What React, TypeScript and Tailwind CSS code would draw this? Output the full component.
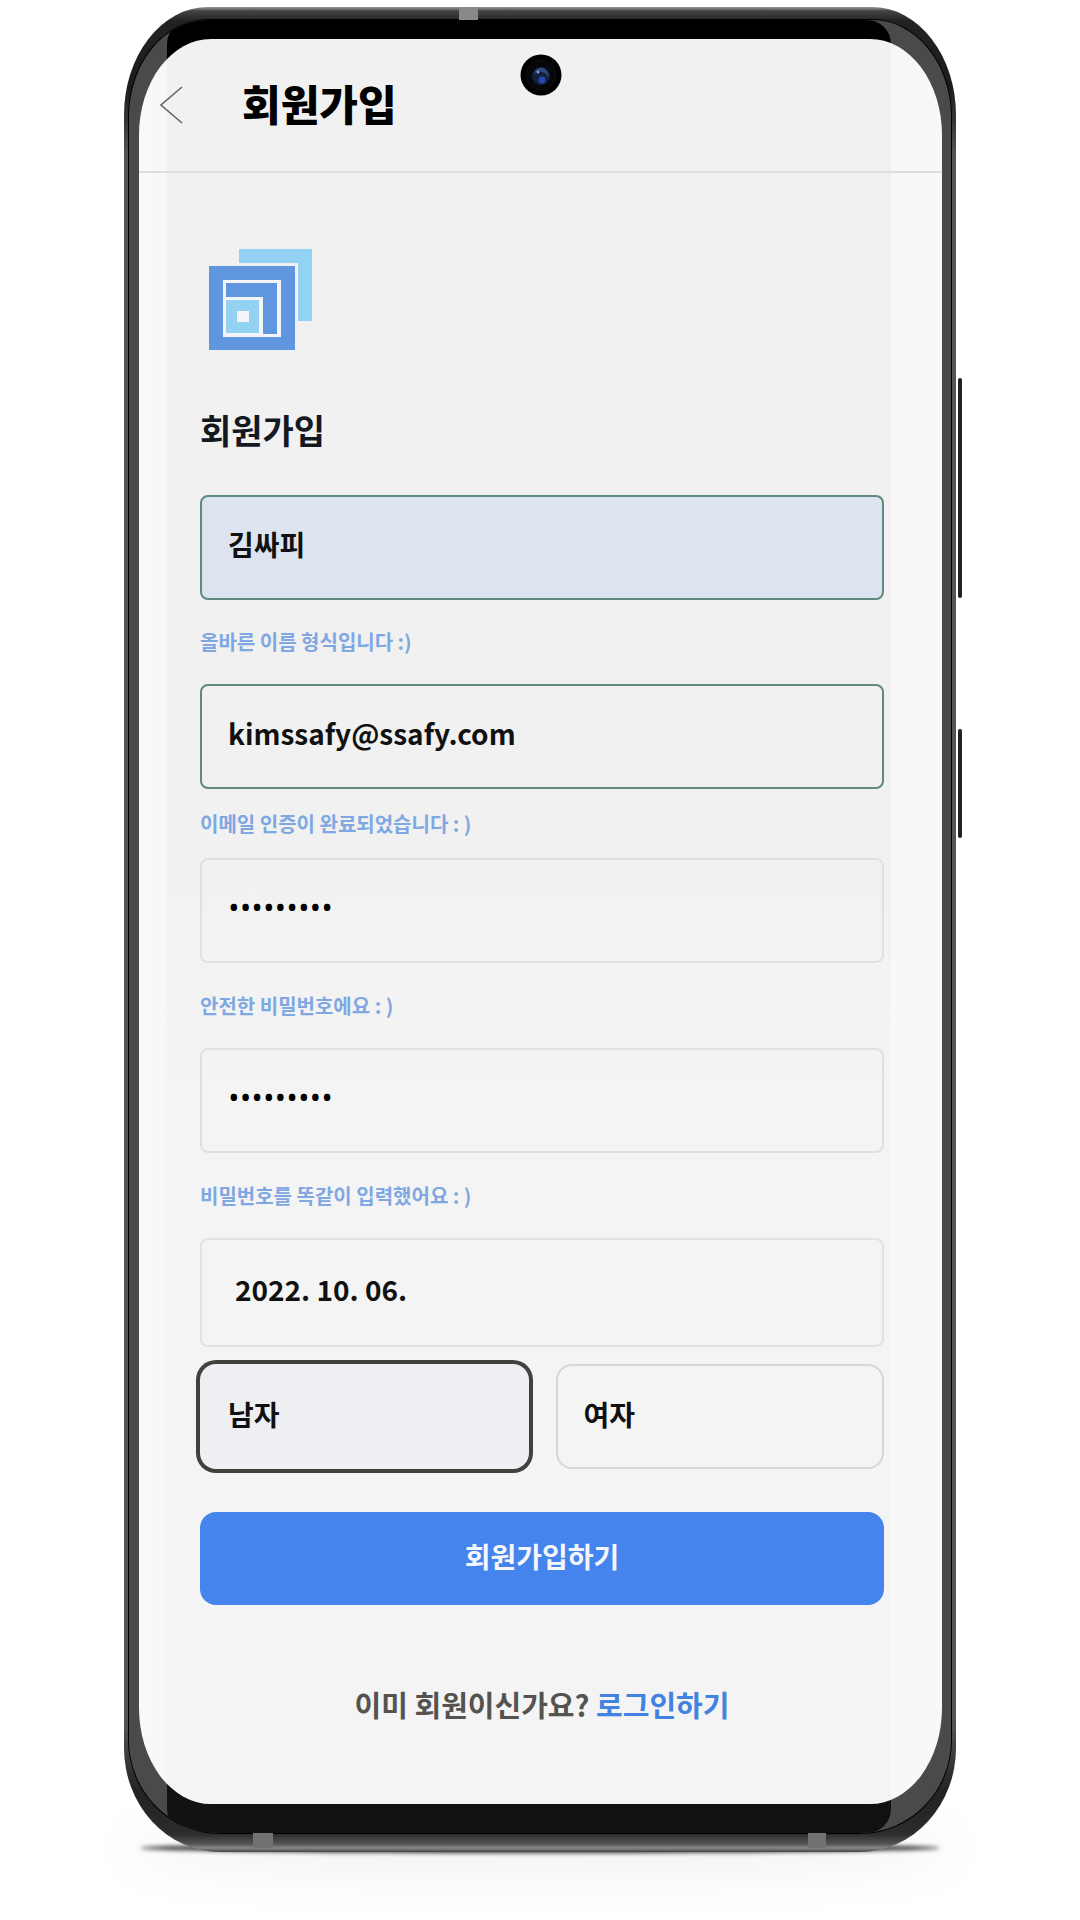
import { useState } from "react";

const FONT = "font-['Noto_Sans_CJK_KR','Noto_Sans',sans-serif]";

function Logo() {
  return (
    <svg viewBox="0 0 103 102" className="h-[102px] w-[103px]" role="img" aria-label="로고">
      <path d="M30 0H103V72H89V14H30Z" fill="#93d2f3" />
      <path d="M0 17H86V101H0Z" fill="#6096e0" />
      <path d="M14 31H72V88H14Z" fill="#f3f5f8" />
      <path d="M17 34H68V85H54V48H17Z" fill="#6096e0" />
      <path d="M17 51H50V84H17Z" fill="#93d2f3" />
      <path d="M28 62H40V73H28Z" fill="#f3f5f8" />
    </svg>
  );
}

type FieldProps = {
  label: string;
  type?: string;
  value: string;
  className: string;
};

function Field({ label, type = "text", value, className }: FieldProps) {
  const [text, setText] = useState(value);
  return (
    <input
      aria-label={label}
      type={type}
      value={text}
      onChange={(e) => setText(e.target.value)}
      className={`w-full rounded-lg border-2 pr-7 pb-2 outline-none ${className}`}
    />
  );
}

function Hint({ children, className }: { children: string; className: string }) {
  return <p className={`flex items-center text-[20px] leading-6 font-bold text-[#7fa8e2] ${className}`}>{children}</p>;
}

function Camera() {
  return (
    <svg viewBox="0 0 42 42" className="absolute top-[15px] left-1/2 h-[42px] w-[42px] -translate-x-1/2" aria-hidden="true">
      <circle cx="21" cy="21" r="20.500" fill="#000" />
      <circle cx="21" cy="21" r="15" fill="#05070a" stroke="#0c0e12" strokeWidth="1" />
      <circle cx="21" cy="22" r="9" fill="#14203c" />
      <path d="M14 20a7 7 0 0 1 12-4 8 8 0 0 1 2 8 7 7 0 0 0-6-6 6 6 0 0 0-8 2Z" fill="#304b80" />
      <circle cx="22" cy="26" r="3.500" fill="#2447b5" />
      <circle cx="18" cy="18" r="1.500" fill="#7ba3e0" />
    </svg>
  );
}

function Header() {
  return (
    <header className="flex h-[134px] items-center border-b-2 border-[#dedede] pl-[21px]">
      <button type="button" aria-label="뒤로" className="cursor-pointer">
        <svg viewBox="0 0 24 40" className="h-10 w-6" fill="none" stroke="#666" strokeWidth="1.600">
          <path d="M22 2L1 20L22 38" />
        </svg>
      </button>
      <h1 className="ml-[58px] pb-1 text-[42px] leading-[60px] font-black text-black">회원가입</h1>
    </header>
  );
}

function Gender() {
  const [gender, setGender] = useState("남자");
  return (
    <div role="radiogroup" aria-label="성별" className="grid grid-cols-2 gap-[27px]">
      {["남자", "여자"].map((name) => (
        <label
          key={name}
          className="flex h-[105px] cursor-pointer items-center rounded-2xl border-2 border-[#d3d5d9] pb-1.5 pl-[26px] text-[28px] font-bold text-[#111] has-checked:border-transparent has-checked:bg-[#eeeff2] has-checked:ring-4 has-checked:ring-[#43413e]"
        >
          <input
            type="radio"
            name="gender"
            className="w-0 appearance-none"
            checked={gender === name}
            onChange={() => setGender(name)}
          />
          {name}
        </label>
      ))}
    </div>
  );
}

function SignUpForm() {
  return (
    <form onSubmit={(e) => e.preventDefault()} className="flex flex-col pt-[76px] pr-[58px] pb-[80px] pl-[61px]">
      <div className="pl-[9px]">
        <Logo />
      </div>
      <h2 className="pt-[49px] pb-[35px] text-[34px] leading-[60px] font-bold text-[#14181f]">회원가입</h2>
      <Field label="이름" value="김싸피" className="h-[105px] border-[#5f8a80] bg-[#dde4f0] pl-[26px] text-[28px] font-bold text-[#111]" />
      <Hint className="h-[84px]">올바른 이름 형식입니다 :)</Hint>
      <Field label="이메일" type="email" value="kimssafy@ssafy.com" className="h-[105px] border-[#5f8a80] pl-[26px] text-[28px] font-bold text-[#111]" />
      <Hint className="h-[69px]">{"이메일 인증이 완료되었습니다 : )"}</Hint>
      <Field label="비밀번호" type="password" value="ssafy1234" className="h-[105px] border-[#e0e0e0] pl-[26px] font-['Open_Sans',sans-serif] text-[31px] text-black" />
      <Hint className="h-[85px]">{"안전한 비밀번호에요 : )"}</Hint>
      <Field label="비밀번호 확인" type="password" value="ssafy1234" className="h-[105px] border-[#e0e0e0] pl-[26px] font-['Open_Sans',sans-serif] text-[31px] text-black" />
      <Hint className="h-[85px]">{"비밀번호를 똑같이 입력했어요 : )"}</Hint>
      <div className="flex flex-col gap-[17px]">
        <Field label="생년월일" value="2022. 10. 06." className="h-[109px] border-[#e2e2e2] pl-[33px] text-[28px] font-bold text-[#111]" />
        <Gender />
      </div>
      <div className="pt-[43px] pb-[79px]">
        <button
          type="submit"
          className="h-[93px] w-full cursor-pointer rounded-2xl bg-[#4584ec] pb-1.5 text-[28px] font-bold text-[#f4f6fb]"
        >
          회원가입하기
        </button>
      </div>
      <p className="text-center text-[29px] leading-[40px] font-bold text-[#555350]">
        이미 회원이신가요?{" "}
        <a href="#login" className="text-[#4282e0]">
          로그인하기
        </a>
      </p>
    </form>
  );
}

export default function App() {
  return (
    <div className={`flex min-h-screen items-start bg-white pt-[7px] pr-[118px] pb-[69px] pl-[124px] ${FONT}`}>
      <div className="relative isolate min-w-0 flex-1">
        <div className="absolute inset-x-4 -bottom-px -z-10 h-2.5 rounded-[50%] bg-[#333] blur-[2px]" />
        <div className="absolute inset-x-0 -bottom-6 -z-20 h-14 rounded-[50%] bg-black/5 blur-xl" />

        <div className="relative overflow-hidden bg-[linear-gradient(to_bottom,#999_0,#444_4px,#222_14px,#1c1c1c_80px,#555_150px,#555_calc(100%-130px),#222_calc(100%-60px),#2c2c2c_calc(100%-18px),#555_calc(100%-8px),#888_calc(100%-4px),#444_100%)] [border-radius:84px_84px_96px_96px/108px_108px_104px_104px]">
          <div className="absolute inset-x-1 top-3 bottom-[18px] overflow-hidden border border-black bg-[#4a4a4a] [border-radius:80px_80px_92px_92px/98px_98px_94px_94px]">
            <div className="mr-[60px] ml-[38px] h-full rounded-[24px] bg-[linear-gradient(to_bottom,#000_50%,#111_60%)]" />
          </div>

          <div className="relative flex h-8 pl-[335px]">
            <span className="h-[13px] w-[19px] bg-[#888]" />
          </div>
          <main className="relative mr-[14px] ml-[15px] overflow-hidden bg-[linear-gradient(to_right,#f9f9f9_0,#f7f7f7_28px,transparent_28px,transparent_calc(100%-51px),#f8f8f8_calc(100%-51px)),linear-gradient(to_bottom,#f1f1f1_45%,#f4f4f4_60%)] [border-radius:72px/96px]">
            <Header />
            <Camera />
            <SignUpForm />
          </main>
          <div className="relative flex h-12 items-end justify-between pr-[130px] pb-1 pl-[129px]">
            <span className="h-[15px] w-5 bg-[#727272]" />
            <span className="h-[15px] w-[18px] bg-[#727272]" />
          </div>
        </div>
      </div>
      <div className="flex flex-col gap-[131px] pt-[371px] pl-[2px]">
        <span className="h-[220px] w-1 rounded-full bg-[#222]" />
        <span className="h-[109px] w-1 rounded-full bg-[#222]" />
      </div>
    </div>
  );
}
